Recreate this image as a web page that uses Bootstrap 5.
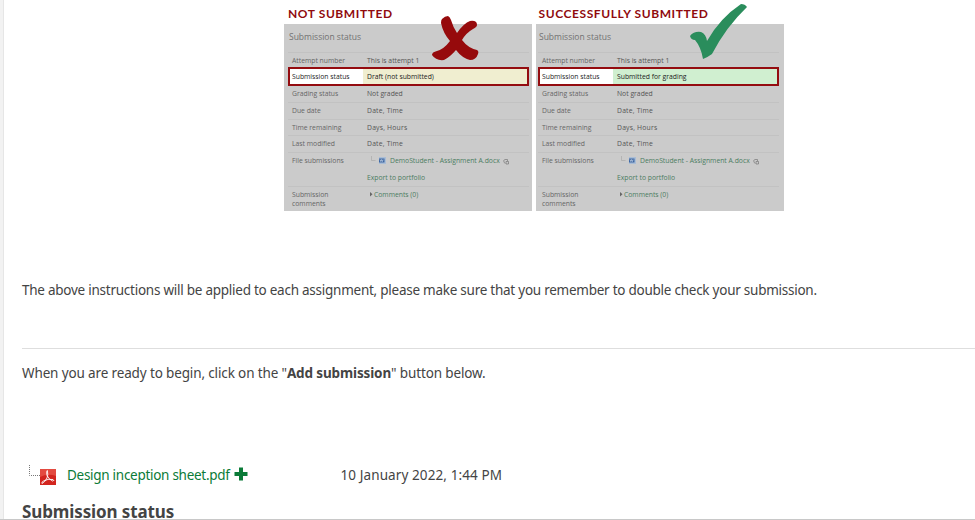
<!DOCTYPE html>
<html lang="en">
<head>
<meta charset="utf-8">
<title>Assignment submission</title>
<link href="https://cdn.jsdelivr.net/npm/bootstrap@5.3.0/dist/css/bootstrap.min.css" rel="stylesheet">
<style>
body{font-family:"Noto Sans","Open Sans",sans-serif;font-size:13.5px;line-height:20px;color:#444;background:#fff;height:520px}
.page-shell{height:520px;border-bottom:1px solid #c8c8c8}
.side-edge{width:4px;background:#f2f2f2;border-right:1px solid #e6e6e6;flex:none}
.content-pane{padding-left:18px;white-space:nowrap}
.compare{margin-left:262px;gap:4px;height:211px}
.shot{width:248px;font-family:"Open Sans",sans-serif}
.shot-title{height:24px;padding-left:4px;color:#900a0d;font:700 12px/28px Lato,sans-serif;letter-spacing:.58px}
.shot-box{height:187px;background:#cbcbcb;padding:0 3px 0 4px;color:#666;font-size:6.8px;line-height:9px}
.shot-head{height:28px;padding:7px 0 0 1px;font-size:8.5px;line-height:11px;color:#727272}
.srow{border-top:1px solid #c2c2c2;height:16.6px;padding:3px 0 0 4px}
.srow .lab{width:75px;flex:none}
.srow .val{color:#555}
.srow.attempt{height:15px}
.srow.hot{height:19px;border:2px solid #940c10;padding:0;background:#fff;color:#222;line-height:16px}
.srow.hot .lab{width:73px;padding-left:2px}
.srow.hot .val{color:#222;padding-left:4px}
.srow.grading{height:16px}
.srow.files{height:34px}
.draft{background:#f0eed0}
.done{background:#d0efd0}
.spaced{letter-spacing:.2px}
.lnk,.srow .lnk{color:#4b7d62}
.export{padding-top:8px}
.mark-x{left:147px;top:15px}
.mark-v{left:153px;top:3px}
.second{margin-left:-1px;width:249px;padding-left:1px}
.second .shot-title{padding-left:2.5px}
.second .shot-box{padding-left:2px;padding-right:5px}
.second .mark-v{left:154px}
.intro{margin-top:69px;letter-spacing:-.25px}
.rule{margin:48px 0 0;border-top:1px solid #dedede;opacity:1}
.ready{margin-top:14px;letter-spacing:-.135px}
.file-row{margin-top:82px;height:20px}
.file-row .name{width:318.5px;padding-left:7px}
.file-row .name span{color:#0b7b38;letter-spacing:-.28px}
.file-row .when{letter-spacing:.1px}
.status-head{font-size:17px;line-height:16px;font-weight:700;letter-spacing:-.12px;margin:19px 0 0;color:#444}
</style>
</head>
<body>
<div class="page-shell d-flex overflow-hidden">
 <div class="side-edge"></div>
 <main class="content-pane flex-grow-1">
  <div class="compare d-flex">
   <section class="shot position-relative">
    <div class="shot-title"><span>NOT SUBMITTED</span></div>
    <div class="shot-box">
     <div class="shot-head">Submission status</div>
     <div class="srow d-flex attempt"><div class="lab">Attempt number</div><div class="val">This is attempt 1</div></div>
     <div class="srow d-flex hot"><div class="lab">Submission status</div><div class="val flex-grow-1 draft">Draft (not submitted)</div></div>
     <div class="srow d-flex grading border-top-0"><div class="lab">Grading status</div><div class="val">Not graded</div></div>
     <div class="srow d-flex"><div class="lab">Due date</div><div class="val spaced">Date, Time</div></div>
     <div class="srow d-flex"><div class="lab">Time remaining</div><div class="val spaced">Days, Hours</div></div>
     <div class="srow d-flex"><div class="lab">Last modified</div><div class="val spaced">Date, Time</div></div>
     <div class="srow d-flex files"><div class="lab">File submissions</div><div class="val lnk"><div class="d-flex"><svg width="23" height="9" viewBox="0 0 23 9"><path d="M4.500 0v4.500h4" fill="none" stroke="#aaa" stroke-width=".7"/><path d="M12 1h7v7h-7z" fill="#a9bdd6"/><path d="M12 2.500h5.500v4h-5.500z" fill="#3c66a3"/><path d="M13 3.500l.8 2 .8-2 .8 2 .8-2" fill="none" stroke="#dde6f0" stroke-width=".6"/></svg><span>DemoStudent - Assignment A.docx</span><svg width="10" height="9" viewBox="0 0 10 9"><path d="M4 6Q3 4 5 3.500H7.500V5M6 5.500h2.500v2.500H6zM4 6l1 1.500" fill="none" stroke="#777" stroke-width=".7"/></svg></div><div class="export">Export to portfolio</div></div></div>
     <div class="srow d-flex"><div class="lab">Submission<br>comments</div><div class="val lnk"><svg width="7" height="7" viewBox="0 0 7 7"><path d="M3 1l2.500 2.200L3 5.500z" fill="#666"/></svg>Comments (0)</div></div>
    </div>
    <svg class="mark-x position-absolute" width="50" height="47" viewBox="0 0 50 47"><path d="M11 4Q14 1 17 1Q19 2 20 5Q22 12 26 18Q33 8 39 6Q46 5 46 10Q46 12 42 14Q35 18 31 25Q37 33 46 35Q48 36 47 39Q45 45 39 45Q31 43 25 35Q19 42 13 45Q5 46 1 40Q1 37 6 36Q13 34 19 26Q12 18 10 8Q10 5 11 4z" fill="#960a0c"/></svg>
   </section>
   <section class="shot second position-relative">
    <div class="shot-title"><span>SUCCESSFULLY SUBMITTED</span></div>
    <div class="shot-box">
     <div class="shot-head">Submission status</div>
     <div class="srow d-flex attempt"><div class="lab">Attempt number</div><div class="val">This is attempt 1</div></div>
     <div class="srow d-flex hot"><div class="lab">Submission status</div><div class="val flex-grow-1 done">Submitted for grading</div></div>
     <div class="srow d-flex grading border-top-0"><div class="lab">Grading status</div><div class="val">Not graded</div></div>
     <div class="srow d-flex"><div class="lab">Due date</div><div class="val spaced">Date, Time</div></div>
     <div class="srow d-flex"><div class="lab">Time remaining</div><div class="val spaced">Days, Hours</div></div>
     <div class="srow d-flex"><div class="lab">Last modified</div><div class="val spaced">Date, Time</div></div>
     <div class="srow d-flex files"><div class="lab">File submissions</div><div class="val lnk"><div class="d-flex"><svg width="23" height="9" viewBox="0 0 23 9"><path d="M4.500 0v4.500h4" fill="none" stroke="#aaa" stroke-width=".7"/><path d="M12 1h7v7h-7z" fill="#a9bdd6"/><path d="M12 2.500h5.500v4h-5.500z" fill="#3c66a3"/><path d="M13 3.500l.8 2 .8-2 .8 2 .8-2" fill="none" stroke="#dde6f0" stroke-width=".6"/></svg><span>DemoStudent - Assignment A.docx</span><svg width="10" height="9" viewBox="0 0 10 9"><path d="M4 6Q3 4 5 3.500H7.500V5M6 5.500h2.500v2.500H6zM4 6l1 1.500" fill="none" stroke="#777" stroke-width=".7"/></svg></div><div class="export">Export to portfolio</div></div></div>
     <div class="srow d-flex"><div class="lab">Submission<br>comments</div><div class="val lnk"><svg width="7" height="7" viewBox="0 0 7 7"><path d="M3 1l2.500 2.200L3 5.500z" fill="#666"/></svg>Comments (0)</div></div>
    </div>
    <svg class="mark-v position-absolute" width="60" height="58" viewBox="0 0 60 58"><path d="M1 33Q5 28 12 29Q17 31 18 38Q31 15 52 1Q56 1 58 4Q37 24 23 51Q19 54 14 56Q12 44 6 37Q2 37 1 33z" fill="#2a8d5c"/></svg>
   </section>
  </div>
  <p class="intro mb-0">The above instructions will be applied to each assignment, please make sure that you remember to double check your submission.</p>
  <hr class="rule">
  <p class="ready mb-0">When you are ready to begin, click on the "<b>Add submission</b>" button below.</p>
  <div class="file-row d-flex">
   <div class="name d-flex"><svg width="38" height="22" viewBox="0 0 38 22" class="flex-shrink-0"><path d="M.5 0v10.500H11" fill="none" stroke="#777" stroke-dasharray="1 1"/><rect x="11" y="4" width="16" height="16" fill="#d2251f"/><path d="M11 4h16v7Q19 8 11 12z" fill="#e34a40"/><path d="M18.300 5.500Q19.500 10 18 13Q16 17 13 18.500Q12 17.500 14.500 16Q19 13.500 24 14.500Q26 15.500 23.500 16Q20 14.500 18 10.500Q17 6.500 18.300 5.500" fill="none" stroke="#fff" stroke-width=".9"/></svg><span>Design inception sheet.pdf</span><svg width="19" height="20" viewBox="0 0 19 20"><path d="M9 2.500h4v4.500h4.500v4H13v4.500H9V11H4.500V7H9z" fill="#0b7b38"/></svg></div>
   <div class="when">10 January 2022, 1:44 PM</div>
  </div>
  <h3 class="status-head">Submission status</h3>
 </main>
</div>
<script src="https://cdn.jsdelivr.net/npm/bootstrap@5.3.0/dist/js/bootstrap.bundle.min.js"></script>
</body>
</html>
